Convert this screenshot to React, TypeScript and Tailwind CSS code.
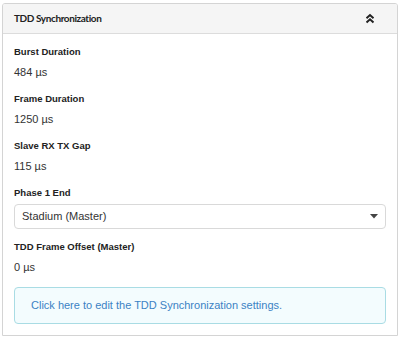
import React from "react";

function Label({ children }: { children: React.ReactNode }) {
  return <div className="h-[12px] text-[9.5px] font-bold leading-[12px] text-[#222]">{children}</div>;
}

function Field({ label, value }: { label: string; value: string }) {
  return (
    <div className="flex flex-col">
      <Label>{label}</Label>
      <div className="mt-[7px] h-[14px] text-[11px] leading-[14px] text-[#333]">{value}</div>
    </div>
  );
}

export default function App() {
  return (
    <div className="w-[401px] h-[338px] bg-white pt-[3px] pl-[2px]" style={{ fontFamily: '"Liberation Sans", Arial, sans-serif' }}>
      <div className="w-[396px] h-[333px] border border-[#d4d4d4] rounded-t-[3px] flex flex-col overflow-hidden">
        <div className="h-[30px] shrink-0 bg-[#f5f5f5] border-b border-[#dcdcdc] flex items-center justify-between pl-[11px] pr-[22px]">
          <span className="text-[10px] font-bold text-[#222] tracking-[-0.4px]" style={{ fontFamily: 'Lato, "Liberation Sans", sans-serif' }}>TDD Synchronization</span>
          <svg width="10" height="11" viewBox="0 0 10 11" className="text-[#222]">
            <path d="M1.5 5.2 L5 2 L8.5 5.2" fill="none" stroke="currentColor" strokeWidth="2" />
            <path d="M1.5 9.5 L5 6.3 L8.5 9.5" fill="none" stroke="currentColor" strokeWidth="2" />
          </svg>
        </div>
        <div className="flex flex-col px-[11px] pt-[12px]">
          <Field label="Burst Duration" value="484 µs" />
          <div className="h-[14px] shrink-0" />
          <Field label="Frame Duration" value="1250 µs" />
          <div className="h-[14px] shrink-0" />
          <Field label="Slave RX TX Gap" value="115 µs" />
          <div className="h-[14px] shrink-0" />
          <Label>Phase 1 End</Label>
          <div className="mt-[5px] h-[25px] shrink-0 border border-[#d9d9d9] rounded-[4px] flex items-center justify-between pl-[7px] pr-[7px]">
            <span className="text-[11px] text-[#333]">Stadium (Master)</span>
            <svg width="8" height="5" viewBox="0 0 8 5"><path d="M0 0 L8 0 L4 4.5 Z" fill="#444" /></svg>
          </div>
          <div className="h-[12px] shrink-0" />
          <Field label="TDD Frame Offset (Master)" value="0 µs" />
          <div className="h-[13px] shrink-0" />
          <div className="h-[37px] shrink-0 border border-[#a9dce4] bg-[#f3fcfe] rounded-[4px] flex items-center pl-[16px]">
            <span className="text-[11px] text-[#3b82c4]">Click here to edit the TDD Synchronization settings.</span>
          </div>
        </div>
      </div>
    </div>
  );
}
